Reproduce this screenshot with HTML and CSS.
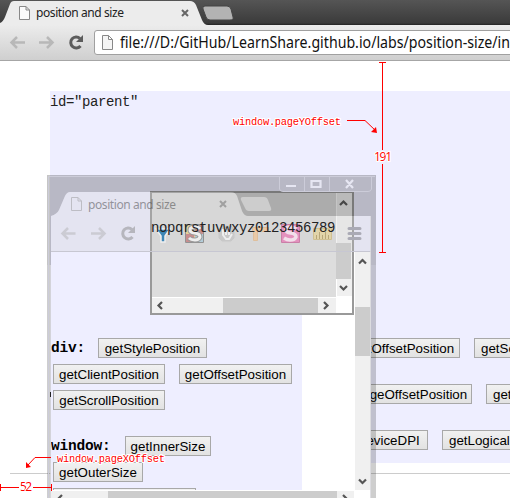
FILE: index.html
```html
<!DOCTYPE html>
<html lang="en">
<head>
<meta charset="utf-8">
<title>position and size</title>
<link rel="stylesheet" href="styles.css">
</head>
<body>
<header class="browser">
  <svg class="tabs" width="510" height="25" viewBox="0 0 510 25">
    <path d="M0 25V23Q3 22 5 17L10 4Q11 1 14 1H190Q194 1 196 5L202 20Q204 25 208 25Z" fill="#ececec"/>
    <path d="M205 6H227Q230 6 231 9L233 17Q234 20 230 20H210Q207 20 206 17L203 9Q202 6 205 6Z" fill="#b3b3b3" stroke="#444"/>
    <path d="M19.500 6.500H26L29.500 10V19.500H19.500ZM26 6.500V10H29.500" fill="#fafafa" stroke="#888"/>
    <text class="tab-title" x="36" y="17" textLength="88">position and size</text>
    <path d="M182 10L188 16M188 10L182 16" stroke="#666" stroke-width="2"/>
  </svg>
  <div class="toolbar">
    <svg width="94" height="35" viewBox="0 25 94 35" fill="none">
      <path d="M25 42.500H12M17 37L11.500 42.500L17 48M39 42.500H52M47 37L52.500 42.500L47 48" stroke="#b8b8b8" stroke-width="2.500"/>
      <path d="M80 38.500A5.500 5.500 0 1 0 80.500 46" stroke="#5c5c5c" stroke-width="3"/><path d="M83 35V42H76Z" fill="#5c5c5c"/>
    </svg>
    <div class="address">
      <svg width="13" height="16"><path d="M1.500 .500H7.500L11.500 4.500V14.500H1.500ZM7.500 .500V4.500H11.500" fill="#f5f5f5" stroke="#888"/></svg>
      <svg width="396" height="23"><text class="url" x="6" y="17" textLength="390" lengthAdjust="spacingAndGlyphs">file:///D:/GitHub/LearnShare.github.io/labs/position-size/in</text></svg>
    </div>
  </div>
</header>
<main>
  <section class="parent">
    <div class="mono">id="parent"</div>
    <div class="outer-rows">
      <div class="row r1"><button>getOffsetPosition</button><button class="cut">getScrollPosition</button></div>
      <div class="row r2"><button>getPageOffsetPosition</button><button class="cut">getScreenPosition</button></div>
      <div class="row r3"><button>getDeviceDPI</button><button class="cut">getLogicalDPI</button></div>
    </div>
  </section>
  <div class="rule"></div>
</main>

<div class="window">
  <div class="view">
    <div class="page">
      <div class="row"><b>div:</b><button class="w109">getStylePosition</button></div>
      <div class="row under"><button class="w112">getClientPosition</button><button class="w113">getOffsetPosition</button></div>
      <div class="row under"><button class="w112">getScrollPosition</button></div>
      <div class="row gap"><b class="wide">window:</b><button class="w86">getInnerSize</button></div>
      <div class="row under"><button class="w90">getOuterSize</button></div>
      <div class="row under"><button class="w143"></button></div>
    </div>
    <svg class="vbar" width="16" height="239" viewBox="0 0 16 239"><path fill="#f0f0f0" d="M0 0H16V239H0Z"/><path fill="#ccc" d="M0 55H15V104H0Z"/><path d="M4 11.500L7.500 8L11 11.500M4 227.500L7.500 231L11 227.500" fill="none" stroke="#555" stroke-width="2.200"/></svg>
  </div>
  <svg class="hbar" width="319" height="8" viewBox="0 0 319 8"><path fill="#f0f0f0" d="M0 1H303V8H0Z"/><path fill="#ccc" d="M57 1H286V8H57Z"/><path d="M11 5L7 9M292 5L296 9" stroke="#555" stroke-width="2.200"/></svg>
</div>

<div class="child">
  <svg width="200" height="120" viewBox="0 0 200 120">
    <path fill="#fff" d="M184 0H200V120H0V104H184Z"/>
    <path fill="#f0f0f0" d="M185 0H200V103H185ZM0 105H184V120H0Z"/>
    <path fill="#ccc" d="M184 50H199V86H184ZM71 105H166V120H71Z"/>
    <path d="M188 12L191.500 8.500L195 12M188 93L191.500 96.500L195 93M10 109L6.500 112.500L10 116M172 109L175.500 112.500L172 116" fill="none" stroke="#555" stroke-width="2.200"/>
  </svg>
</div>

<svg class="chrome" width="329" height="323" viewBox="47 175 329 323">
  <path class="frame" d="M47 175H376V265H371V216H248Q244 216 242 211L237 196Q235 192 231 192H70Q67 192 65 196L59 210Q57 214 51 216V265H47Z"/>
  <path class="side" d="M47 265H51V498H47ZM371 265H376V498H371Z"/>
  <path class="bar" d="M51 252V216Q57 214 59 210L65 196Q67 192 70 192H231Q235 192 237 196L242 211Q244 216 248 216H371V252Z"/>
  <path d="M243 197H264Q267 197 268 200L271 208Q272 211 269 211H249Q246 211 245 208L241 200Q240 197 243 197Z" fill="#fff" opacity=".4"/>
  <path d="M51 251.500H371" stroke="#c7c7d2"/>
  <path d="M48.500 498V176.500H375M279.500 177V189Q280 191.500 283 191.500H368Q371 191.500 371.500 189V176M304.500 177V191M329.500 177V191" fill="none" stroke="#ccccd9"/>
  <path d="M370.500 216V498M50.500 265V498" stroke="#d8d8dd" opacity=".8"/>
  <path d="M286 186H296M311.500 181H320.500V187H311.500ZM346 180L353 188M353 180L346 188" fill="none" stroke="#e6e6f2" stroke-width="2.200"/>
  <g class="faint">
    <path d="M71.500 197.500H78L81.500 201V210.500H71.500ZM78 197.500V201H81.500" fill="none" stroke="#888"/>
    <text class="tab-title" x="88" y="208.500" textLength="88">position and size</text>
    <path d="M220 201L226 207M226 201L220 207" stroke="#555" stroke-width="2"/>
    <path d="M75.500 233.500H63M68 228L62.500 233.500L68 239M91 233.500H104M99 228L104.500 233.500L99 239" fill="none" stroke="#aaa" stroke-width="2.500"/>
    <path d="M132 229.500A5.500 5.500 0 1 0 132.500 237" fill="none" stroke="#777" stroke-width="3"/><path d="M135 226V233H128Z" fill="#777"/>
  </g>
  <path d="M156 229H170L165 236V242H161V236Z" fill="#3e86b5" stroke="#eee" stroke-width="1.500"/>
  <path d="M185.500 224.500H203.500V242.500H185.500Z" fill="#e7cf96" stroke="#929292"/>
  <path d="M195 225H203V234H195ZM186 234H194V242H186Z" fill="#c98e8e"/><path d="M195 234H203V242H195Z" fill="#b3ccd8"/>
  <path d="M200 229Q199 227 195 227Q190 227 190 230C190 235 200 231 200 237Q199 240 195 240Q191 240 189 238" fill="none" stroke="#999" stroke-width="5"/>
  <path d="M200 229Q199 227 195 227Q190 227 190 230C190 235 200 231 200 237Q199 240 195 240Q191 240 189 238" fill="none" stroke="#eee" stroke-width="3"/>
  <path d="M222 225H231L235 229V238L231 242H222L218 238V229Z" fill="#c8c8c8" stroke="#d6d6d6"/><path d="M223 229V235L226 239H229L232 234M226 228V235M229 228V235" fill="none" stroke="#eee" stroke-width="2"/>
  <path d="M252.500 227.500H268.500V231.500H257.500V240.500H253.500V231.500H252.500Z" fill="#eac9a6" stroke="#dfbf9c"/>
  <path d="M281.500 224.500H299.500V242.500H281.500Z" fill="#e391bd" stroke="#ca7fa7"/>
  <path d="M296 229Q294 227 290 227Q286 227 286 230C286 235 296 231 296 237Q295 240 290 240Q287 240 284 238" fill="none" stroke="#f2dfea" stroke-width="3.500"/>
  <path d="M313.500 228.500H331.500V239.500H313.500Z" fill="#e2d4a9" stroke="#d0c092"/><path d="M316.500 239V235M319.500 239V232M322.500 239V235M325.500 239V232M328.500 239V235" stroke="#b8a779"/>
  <path d="M349 228.500H360M349 233.500H360M349 238.500H360" stroke="#aaaab5" stroke-width="3" stroke-linecap="round"/>
</svg>
<div class="mono letters">nopqrstuvwxyz0123456789</div>

<svg class="notes" width="510" height="498" viewBox="0 0 510 498">
  <path d="M50.500 392V397" stroke="#222"/>
  <path d="M379 62.500H386M382.500 62V150M382.500 164V252M379 252.500H386M.500 484V491M0 487.500H19M33 487.500H51M51.500 484V491M347 120.500H365L376 131M51 457.500H35L28 465" fill="none" stroke="#f00"/>
  <path d="M377 133L371 132L376 127ZM26 468V462L31 467Z" fill="#f00"/>
  <g class="note"><text x="233" y="125" textLength="108">window.pageYOffset</text><text x="57" y="462" textLength="108">window.pageXOffset</text></g>
  <g class="number"><text x="374" y="161" textLength="18">191</text><text x="20" y="491" textLength="12">52</text></g>
</svg>
</body>
</html>
```

FILE: styles.css
```css
* { box-sizing: border-box; }
body { margin: 0; width: 510px; height: 498px; overflow: hidden; background: #fff; position: relative; }
svg { display: block; flex: none; }
.browser { height: 61px; border-bottom: 1px solid #a6a6a6; }
.tabs { background: linear-gradient(#555, #3b3b3b 23px, #222); }
.tab-title { font: 12px "Noto Sans", "Open Sans", sans-serif; fill: #222; }
.toolbar { height: 35px; display: flex; overflow: hidden; background: linear-gradient(#ececec, #cfcfcf); }
.address { height: 25px; width: 430px; margin-top: 5px; flex: none; display: flex; align-items: center; padding-left: 6px; background: #fff; border: 1px solid #a0a0a0; border-radius: 3px; }
.url { font: 15.500px "Noto Sans", "Open Sans", sans-serif; fill: #111; }
main { padding-top: 30px; overflow: hidden; }
.parent { height: 372px; margin-left: 50px; background: #eef; padding-top: 2px; overflow: hidden; }
.mono { font: 14px/18px "Liberation Mono", monospace; letter-spacing: -.4px; color: #222; white-space: nowrap; }
.outer-rows { padding-top: 227px; display: flex; flex-direction: column; gap: 26px; }
.row { display: flex; gap: 14px; height: 20px; white-space: nowrap; }
.r1 { padding-left: 297px; }
.r2 { padding-left: 280px; }
.r3 { padding-left: 280px; }
button { height: 20px; padding: 1px 0 0; border: 1px solid #a8a8a8; background: linear-gradient(#f1f1f1, #e2e2e2); font: 13.333px/17px "Liberation Sans", Arial, sans-serif; color: #000; flex: none; }
.r1 button { width: 113px; }
.r2 button { width: 142px; }
.r3 button { width: 98px; }
.row .cut { text-align: left; padding-left: 6px; }
.rule { margin: 10px 0 0 10px; border-top: 1px solid #ccc; }
.window { position: absolute; left: 51px; top: 252px; width: 320px; height: 246px; background: #fff; overflow: hidden; }
.view { display: flex; height: 238px; overflow: hidden; }
.page { width: 251px; height: 238px; padding-top: 86px; background: #eef; display: flex; flex-direction: column; gap: 6px; }
.page .row { flex: none; }
.page b { width: 33px; font: bold 14.500px/20px "Liberation Mono", monospace; letter-spacing: -.2px; }
.page .wide { width: 60px; }
.under { padding-left: 2px; }
.gap { margin-top: 20px; }
.vbar { margin-left: 53px; }
.w109 { width: 109px; }
.w112 { width: 112px; }
.w113 { width: 113px; }
.w86 { width: 86px; }
.w90 { width: 90px; }
.w143 { width: 143px; }
.child { position: absolute; left: 150px; top: 191px; width: 204px; height: 124px; background: #ddd; border: 2px solid #999; }
.chrome { position: absolute; left: 47px; top: 175px; }
.frame { fill: rgba(30, 30, 30, .26); }
.side { fill: rgba(30, 30, 30, .22); }
.bar { fill: rgba(200, 200, 200, .25); }
.faint { opacity: .42; }
.letters { position: absolute; left: 151px; top: 219px; }
.notes { position: absolute; left: 0; top: 0; }
.note, .number { fill: #f00; stroke: #fff; stroke-width: 2px; paint-order: stroke; }
.note { font: 10.500px "Liberation Mono", monospace; }
.number { font: 12px "Open Sans", sans-serif; }
```
